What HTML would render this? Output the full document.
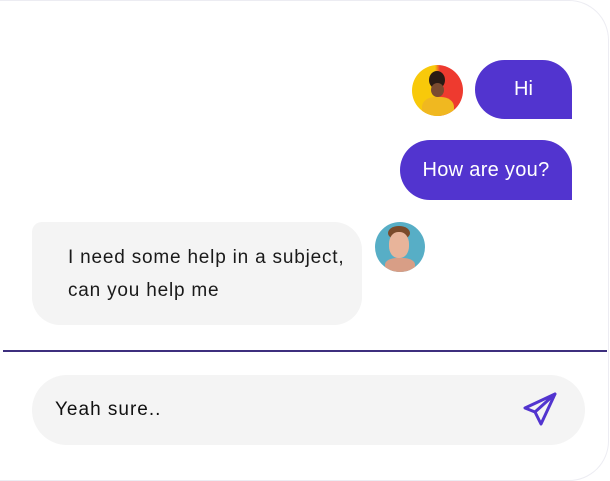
<!DOCTYPE html>
<html><head><style>
body{margin:0;width:610px;height:481px;background:#fff;font-family:"Liberation Sans",sans-serif;overflow:hidden}
.card{position:absolute;left:0;top:0;width:608px;height:479px;border:1px solid #ececf2;border-radius:0 40px 40px 0;border-left:none}
.b{position:absolute;color:#fff;background:#5234cf;font-size:20px;display:flex;align-items:center;justify-content:center}
.av{position:absolute;border-radius:50%;overflow:hidden}
</style></head><body>
<div class="card"></div>
<div class="av" style="left:412px;top:65px;width:51px;height:51px;background:linear-gradient(90deg,#f8c90a 45%,#ee3a2f 55%)">
<div style="position:absolute;left:17px;top:6px;width:16px;height:18px;border-radius:50%;background:#2a1a14"></div>
<div style="position:absolute;left:19px;top:18px;width:13px;height:14px;border-radius:50%;background:#7a4a30"></div>
<div style="position:absolute;left:10px;top:32px;width:32px;height:25px;border-radius:40% 40% 0 0;background:#f0b820"></div>
</div>
<div class="b" style="left:475px;top:60px;width:97px;height:59px;border-radius:30px 30px 0 30px">Hi</div>
<div class="b" style="left:400px;top:140px;width:172px;height:60px;border-radius:30px 30px 0 30px;letter-spacing:0.3px">How are you?</div>
<div style="position:absolute;left:32px;top:222px;width:330px;height:103px;background:#f4f4f4;border-radius:10px 28px 28px 28px;color:#1a1a1a;font-size:19px;line-height:33px;padding:19px 0 0 36px;box-sizing:border-box;letter-spacing:0.8px;white-space:nowrap">I need some help in a subject,<br>can you help me</div>
<div class="av" style="left:375px;top:222px;width:50px;height:50px;background:#57aec6">
<div style="position:absolute;left:13px;top:4px;width:22px;height:14px;border-radius:50%;background:#7a4a2a"></div>
<div style="position:absolute;left:14px;top:10px;width:20px;height:26px;border-radius:45%;background:#e8b49a"></div>
<div style="position:absolute;left:10px;top:36px;width:30px;height:16px;background:#d89e86;border-radius:40% 40% 0 0"></div>
</div>
<div style="position:absolute;left:3px;top:350px;width:604px;height:2px;background:#3d2f7e"></div>
<div style="position:absolute;left:32px;top:375px;width:553px;height:70px;background:#f4f4f4;border-radius:35px"></div>
<div style="position:absolute;left:55px;top:399px;font-size:19px;color:#111;letter-spacing:1px">Yeah sure..</div>
<svg style="position:absolute;left:520px;top:391px" width="38" height="38" viewBox="0 0 38 38"><path d="M35 3 L5 17 L15 21 L21 33 Z M35 3 L15 21" fill="none" stroke="#5234cf" stroke-width="3" stroke-linejoin="round" stroke-linecap="round"/></svg>
</body></html>
